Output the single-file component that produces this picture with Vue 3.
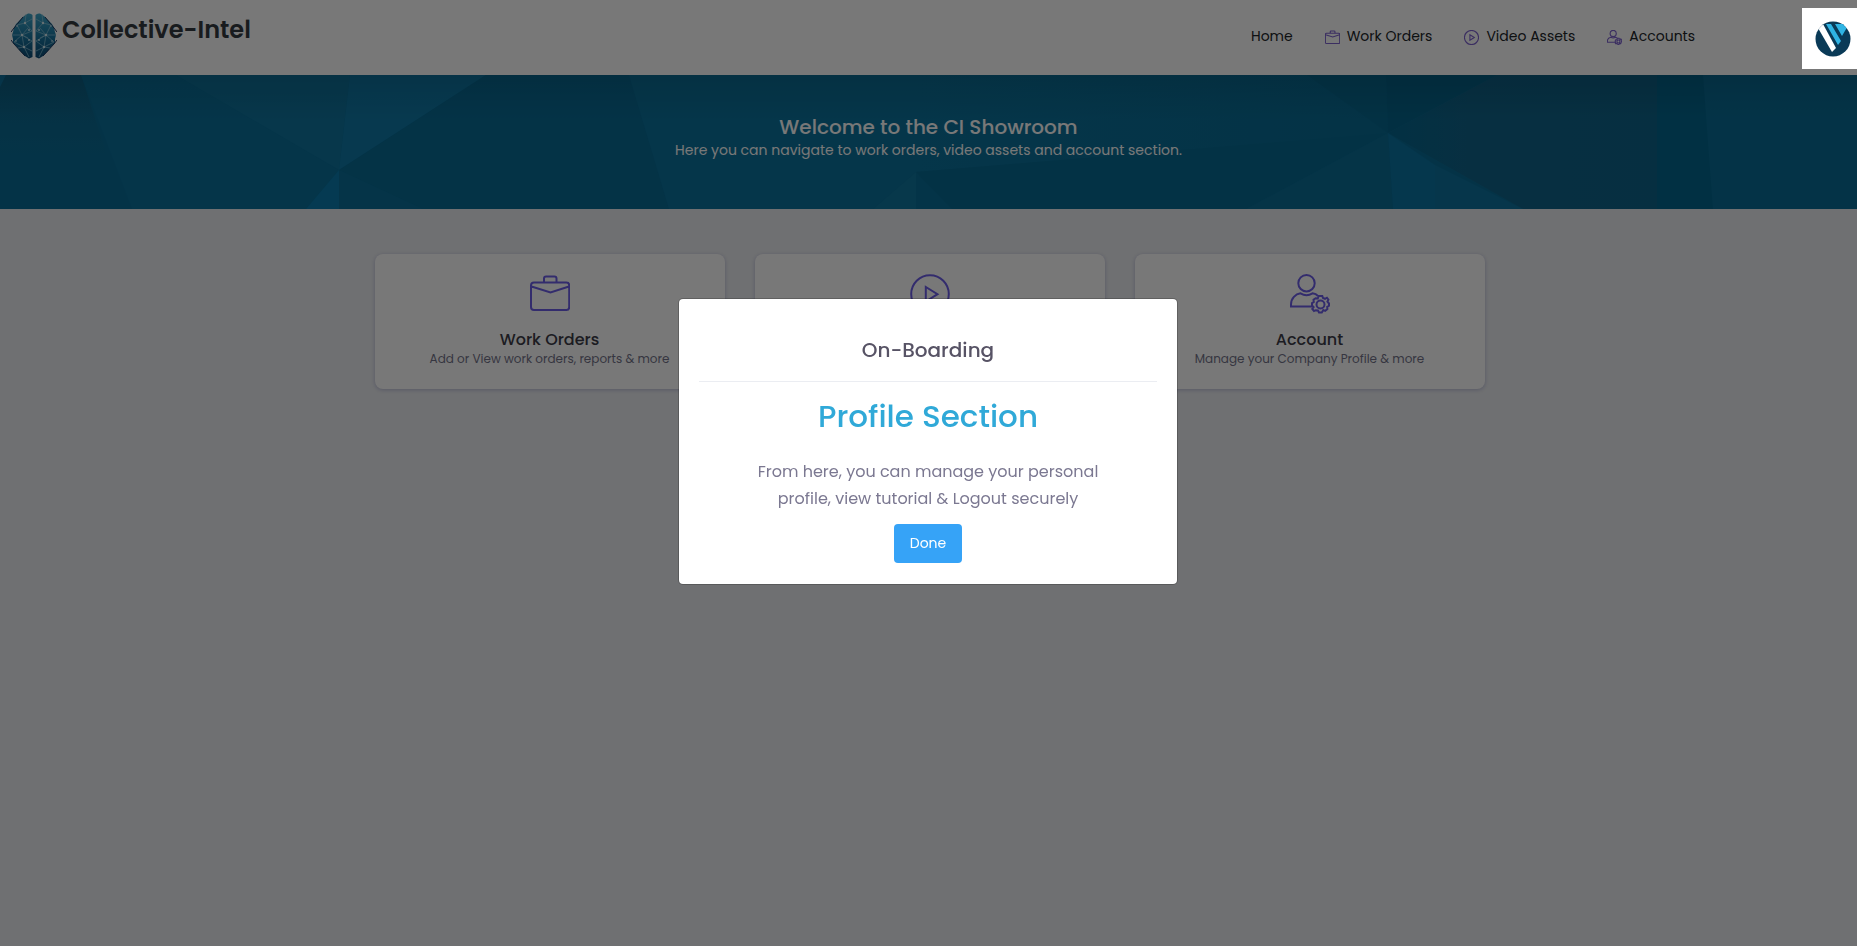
<script setup>
const nav = [
  { label: 'Home' },
  { label: 'Work Orders', icon: 'case' },
  { label: 'Video Assets', icon: 'play' },
  { label: 'Accounts', icon: 'user' },
]
const cards = [
  { title: 'Work Orders', text: 'Add or View work orders, reports & more', icon: 'case' },
  { title: '', text: '', icon: 'play' },
  { title: 'Account', text: 'Manage your Company Profile & more', icon: 'user' },
]
</script>

<template>
  <div class="page">
    <svg class="defs" width="0" height="0" aria-hidden="true">
      <symbol id="case" viewBox="0 0 40 40">
        <path d="M14 8.500V4.500Q14 2.500 16 2.500H24.500Q26.500 2.500 26.500 4.500V8.500M4 8.500H36.500Q39.200 8.500 39.200 11.500V33Q39.200 36 36.500 36H4Q1 36 1 33V11.500Q1 8.500 4 8.500ZM1.500 12.500L20.500 18.500L39 12.500" />
      </symbol>
      <symbol id="play" viewBox="0 0 40 40">
        <circle cx="20" cy="20" r="18.800" />
        <path d="M15.800 13V27.500L27.500 20.200Z" />
      </symbol>
      <symbol id="user" viewBox="0 0 40 40">
        <circle cx="16.500" cy="9.200" r="8.200" />
        <path d="M22.500 32.600H1V30.500C1 24.500 5.500 20 10.500 19.300Q16.500 23 22.500 19.300Q26 19.700 28 22" />
        <circle cx="30.500" cy="30.500" r="4" />
        <path d="M28.700 22H32.300L33 24L35 24.800L36.900 23.700L38.400 25.700L37.400 27.700L39 29.500V31.800L37.200 32.900L37.400 35L35.200 36.800L33.300 36L31.800 38.500H29L28 36.500L25.800 36.200L24 37L22.300 35L23.600 33.200L22 31.500V29.100L23.800 28L23.500 25.800L25.600 24.200L27.800 24.500Z" />
      </symbol>
    </svg>

    <header class="header">
      <a class="brand" href="#">
        <svg class="brain" viewBox="0 0 46 46" aria-hidden="true">
          <defs>
            <linearGradient id="lobe" x1="0" y1="0" x2="0" y2="1">
              <stop offset="0" stop-color="#3fa6c9" />
              <stop offset="0.500" stop-color="#1c79a3" />
              <stop offset="1" stop-color="#0b4a73" />
            </linearGradient>
          </defs>
          <g v-for="side in ['left', 'right']" :key="side" :class="side">
            <path fill="url(#lobe)" d="M21.500 2Q20 0 17 .5L13 3L9 7L5 11L3 15L2 19L1 22L2 26L2 30L5 33L9 38L14 43L18 45.500L21.500 44Z" />
            <path d="M0 19L3 15L12 4M0 27L3 31L14 43" stroke="#203a63" fill="none" />
            <path d="M15 1L14 10L21 6M14 10L6 12L11 22L21 18L14 10M11 22L1 22M11 22L3 29L13 34L11 22L21 28L13 34L18 44M13 34L7 35M13 34L21 38M11 22L17 15M11 22L17 25" stroke="#8fc4d8" stroke-width="0.700" fill="none" />
            <g fill="#d5edf3"><circle cx="14" cy="10" r="1.200" /><circle cx="11" cy="22" r="1.200" /><circle cx="13" cy="34" r="1.200" /><circle cx="18" cy="17" r="0.900" /><circle cx="18" cy="27" r="0.900" /><circle cx="6" cy="13" r="0.800" /><circle cx="5" cy="28" r="0.800" /></g>
          </g>
        </svg>
        <span class="brand-name">Collective-Intel</span>
      </a>
      <nav class="nav">
        <a v-for="item in nav" :key="item.label" href="#">
          <svg v-if="item.icon" class="nav-icon" aria-hidden="true"><use :href="'#' + item.icon" /></svg>
          <span>{{ item.label }}</span>
        </a>
      </nav>
      <button class="profile" aria-label="Profile">
        <svg width="36" height="36" viewBox="0 0 36 36" aria-hidden="true">
          <defs><clipPath id="disc"><circle cx="18" cy="18" r="17.500" /></clipPath></defs>
          <g clip-path="url(#disc)">
            <path fill="#0a3a57" d="M0 0H36V36H0Z" />
            <path fill="#fff" d="M3 7L8 3L21 27L17 31Z" />
            <path fill="#2fb4e4" d="M11 3H16L26 20L23 24ZM20 3H34L27 15Z" />
          </g>
        </svg>
      </button>
    </header>

    <section class="banner">
      <svg class="facets" viewBox="0 0 1857 134" preserveAspectRatio="none" aria-hidden="true">
        <defs>
          <linearGradient id="top" x1="0" y1="0" x2="0" y2="1"><stop offset="0" stop-color="#000" stop-opacity="0.100" /><stop offset="1" stop-color="#000" stop-opacity="0" /></linearGradient>
          <linearGradient id="corner" x1="0" y1="0" x2="0" y2="1"><stop offset="0" stop-color="#0f658a" /><stop offset="1" stop-color="#0a6d97" /></linearGradient>
          <linearGradient id="slope" x1="0" x2="1"><stop offset="0" stop-color="#0c739d" /><stop offset="1" stop-color="#096c95" /></linearGradient>
          <linearGradient id="deep" x1="0" x2="1"><stop offset="0" stop-color="#06678f" /><stop offset="0.300" stop-color="#10658b" /><stop offset="1" stop-color="#0e658b" /></linearGradient>
        </defs>
        <path fill="#0a6e98" d="M0 0H1857V134H0Z" />
        <path fill="url(#corner)" d="M0 0H81L107 80H0Z" />
        <path fill="#0f7aa9" d="M0 0H6L0 12Z" />
        <path fill="#0b719c" d="M81 0H176L339 95L306 134H132Z" />
        <path fill="#0f759f" d="M176 0H350L339 95Z" />
        <path fill="#0f7aa8" d="M350 0H486L339 95Z" />
        <path fill="#096c96" d="M486 0H629L669 134H423L339 95Z" />
        <path fill="#0b7099" d="M339 95L423 134H339Z" />
        <path fill="#0b7cae" d="M339 95V134H306Z" />
        <path fill="#0c739d" d="M629 0H916V97L873 134H669Z" />
        <path fill="url(#slope)" d="M915 0H1307L1388 58L915 97Z" />
        <path fill="#0f779f" d="M916 97V134H873Z" />
        <path fill="#0a6f99" d="M916 97L952 134H916Z" />
        <path fill="#086b93" d="M916 97L1388 58L1246 134H952Z" />
        <path fill="#086990" d="M1307 0H1386L1388 58Z" />
        <path fill="#06658c" d="M1386 0H1497L1388 58Z" />
        <path fill="url(#deep)" d="M1497 0H1657V134H1523L1388 58Z" />
        <path fill="#04678f" d="M1657 0H1703L1713 134H1657Z" />
        <path fill="#0b6f98" d="M1388 58L1393 134H1246Z" />
        <path fill="#0b75a3" d="M1388 58L1435 90V134H1393Z" />
        <path fill="#0d749f" d="M1435 90L1523 134H1435Z" />
        <path fill="url(#top)" d="M0 0H1857V45H0Z" />
      </svg>
      <div class="welcome">
        <h1>Welcome to the CI Showroom</h1>
        <p>Here you can navigate to work orders, video assets and account section.</p>
      </div>
    </section>

    <main class="cards">
      <a v-for="card in cards" :key="card.icon" class="card" href="#">
        <svg class="card-icon" aria-hidden="true"><use :href="'#' + card.icon" /></svg>
        <h2 v-if="card.title">{{ card.title }}</h2>
        <p v-if="card.text">{{ card.text }}</p>
      </a>
    </main>

    <div class="backdrop">
      <div class="modal" role="dialog" aria-modal="true" aria-labelledby="tour-title">
        <h2 id="tour-title">On-Boarding</h2>
        <h3>Profile Section</h3>
        <p>From here, you can manage your personal profile, view tutorial &amp; Logout securely</p>
        <button class="done">Done</button>
      </div>
    </div>
  </div>
</template>

<style>
body {
  background: #eceef2;
}
</style>

<style scoped>
.page {
  min-height: 100vh;
  font-family: Poppins, Inter, "Open Sans", sans-serif;
  font-size: 14px;
  color: #2b2f38;
}
h1, h2, h3, p {
  margin: 0;
  font-weight: 500;
}
a {
  color: inherit;
  text-decoration: none;
}
.defs {
  position: absolute;
}
.header {
  display: flex;
  align-items: center;
  box-sizing: border-box;
  height: 75px;
  padding-bottom: 3px;
  background: #fff;
}
.brand {
  display: flex;
  align-items: center;
  gap: 5px;
  padding-left: 11px;
}
.brain {
  width: 46px;
  height: 46px;
}
.right {
  transform: translateX(46px) scaleX(-1);
}
.brand-name {
  padding-bottom: 12px;
  font-size: 24px;
  line-height: 30px;
  font-weight: 600;
  color: #343a40;
}
.nav {
  display: flex;
  gap: 32px;
  margin-left: auto;
  margin-right: 107px;
}
.nav a {
  display: flex;
  align-items: center;
  gap: 7px;
  color: #212529;
  line-height: 20px;
}
.nav-icon {
  width: 15px;
  height: 15px;
  margin-top: 3px;
  fill: none;
  stroke: #7d62ce;
  stroke-width: 3;
}
.profile {
  position: relative;
  z-index: 20;
  display: flex;
  align-items: center;
  width: 55px;
  height: 61px;
  margin-top: 5px;
  padding: 0 0 0 13px;
  border: 0;
  background: #fff;
}
.banner {
  position: relative;
  display: flex;
  justify-content: center;
  height: 134px;
}
.facets {
  position: absolute;
  inset: 0;
  width: 100%;
  height: 100%;
}
.welcome {
  position: relative;
  padding-top: 40px;
  text-align: center;
  color: #fff;
}
.welcome h1 {
  font-size: 20px;
  line-height: 24px;
}
.welcome p {
  font-size: 14px;
  line-height: 22px;
  font-weight: 400;
}
.cards {
  display: grid;
  grid-template-columns: repeat(3, 1fr);
  gap: 30px;
  max-width: 1110px;
  margin: 45px auto 0;
  padding-left: 2px;
}
.card {
  display: flex;
  flex-direction: column;
  align-items: center;
  box-sizing: border-box;
  min-height: 135px;
  padding-top: 20px;
  border-radius: 8px;
  background: #fff;
  box-shadow: 0 1px 4px #b9bbd5;
}
.card-icon {
  width: 40px;
  height: 40px;
  margin-bottom: 16px;
  fill: none;
  stroke: #6d5fe8;
  stroke-width: 2;
}
.card h2 {
  font-size: 16px;
  line-height: 20px;
  color: #3d3d48;
}
.card p {
  font-size: 12px;
  line-height: 18px;
  font-weight: 400;
  color: #74748a;
}
.backdrop {
  position: fixed;
  inset: 0;
  z-index: 10;
  display: flex;
  justify-content: center;
  align-items: flex-start;
  padding: 298px 1px 0 0;
  background: rgba(0, 0, 0, 0.53);
}
.modal {
  width: 500px;
  box-sizing: border-box;
  padding: 36px 20px 21px;
  border: 1px solid rgba(0, 0, 0, 0.2);
  border-radius: 5px;
  background: #fff;
  background-clip: padding-box;
  text-align: center;
}
.modal h2 {
  padding-bottom: 16px;
  border-bottom: 1px solid #ebedf2;
  font-size: 20px;
  line-height: 30px;
  color: #575365;
}
.modal h3 {
  margin-top: 15px;
  font-size: 31px;
  line-height: 38px;
  color: #30a9d8;
}
.modal p {
  margin: 23px 40px 12px;
  font-size: 16px;
  line-height: 27px;
  font-weight: 400;
  color: #7b7891;
}
.done {
  height: 39px;
  padding: 0 16px;
  border: 0;
  border-radius: 4px;
  background: #36a3f7;
  color: #fff;
  font: inherit;
}
</style>
